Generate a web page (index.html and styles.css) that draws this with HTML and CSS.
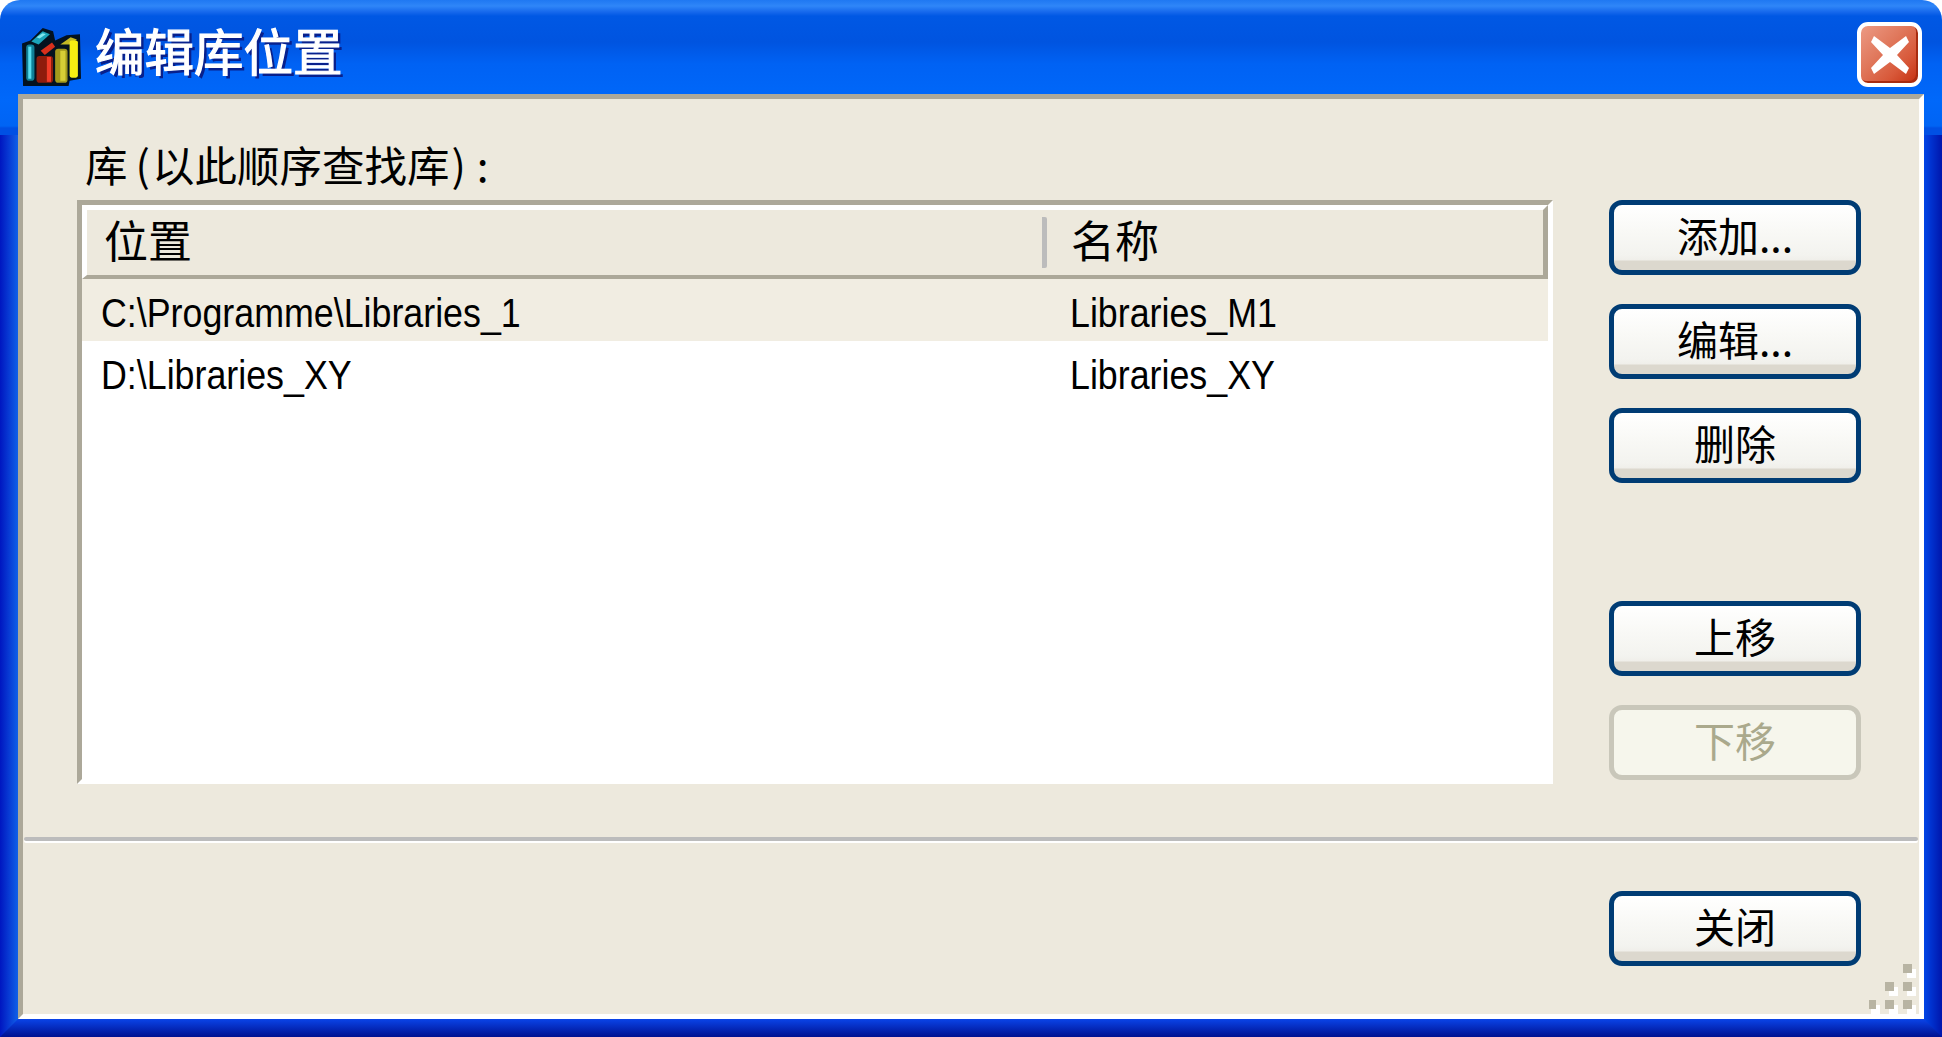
FILE: index.html
```html
<!DOCTYPE html>
<html lang="zh-CN">
<head>
  <meta charset="UTF-8" />
  <title>编辑库位置</title>
  <link rel="stylesheet" href="styles.css">
</head>
<body>

  <div class="window">

    <header class="titlebar">
      <svg class="title-icon" viewBox="0 0 58 58" width="60" height="60">
        <path d="M1 16 L9 13 L21 1 L31 4 L33 13 L44 8 L57 7 L58 50 L47 52 L46 57 L2 57 Z" fill="#03121f"/>
        <path d="M10 14 L21 4 L28 7 L17 17 Z" fill="#1aa3b8"/>
        <path d="M15 10 L21 6 L24 7 L18 11 Z" fill="#7fe6ee"/>
        <rect x="5" y="17" width="8" height="35" rx="3" fill="#0f7f96"/>
        <rect x="7" y="19" width="3" height="31" fill="#58dff0"/>
        <path d="M19 23 L30 15 L33 19 L23 27 Z" fill="#d8301c"/>
        <rect x="15" y="28" width="16" height="26" rx="3" fill="#8e1c0c"/>
        <rect x="25" y="29" width="4" height="24" fill="#f03c28"/>
        <rect x="33" y="21" width="12" height="33" rx="3" fill="#a39a1c"/>
        <rect x="38" y="23" width="5" height="29" fill="#d6ce36"/>
        <path d="M38 17 L48 10 L54 12 L48 17 Z" fill="#c4ba24"/>
        <rect x="47" y="13" width="8" height="36" rx="2" fill="#f6ee12"/>
      </svg>
      <h1 class="title-text">编辑库位置</h1>
      <button class="close-btn" type="button" aria-label="关闭">
        <svg viewBox="0 0 38 38" width="38" height="38">
          <path d="M3 0 L19 12 L35 0 L38 6 L26 19 L38 32 L35 38 L19 26 L3 38 L0 32 L12 19 L0 6 Z" fill="#fff"/>
        </svg>
      </button>
    </header>

    <main class="client">
      <div class="top-area">
        <label class="list-label">库<span class="paren-open">(</span>以此顺序查找库<span class="paren-close">)</span><span class="colon">:</span></label>
        <span></span>

        <div class="list-box">
          <div class="list-head">
            <div class="head-cell head-first">位置</div>
            <div class="head-cell head-second">名称</div>
          </div>
          <div class="list-row row-selected">
            <div><span class="cell-text">C:\Programme\Libraries_1</span></div>
            <div><span class="cell-text">Libraries_M1</span></div>
          </div>
          <div class="list-row">
            <div><span class="cell-text">D:\Libraries_XY</span></div>
            <div><span class="cell-text">Libraries_XY</span></div>
          </div>
        </div>

        <div class="btn-column">
          <button class="btn" type="button">添加...</button>
          <button class="btn" type="button">编辑...</button>
          <button class="btn" type="button">删除</button>
          <button class="btn btn-gap" type="button">上移</button>
          <button class="btn" type="button" disabled>下移</button>
        </div>
      </div>

      <div class="divider"></div>

      <div class="bottom-area">
        <button class="btn" type="button">关闭</button>
      </div>

      <svg class="grip" viewBox="0 0 50 50" width="50" height="50">
        <g fill="#fff">
          <rect x="38" y="5" width="9" height="9"/>
          <rect x="20" y="23" width="9" height="9"/>
          <rect x="38" y="23" width="9" height="9"/>
          <rect x="2" y="41" width="9" height="9"/>
          <rect x="20" y="41" width="9" height="9"/>
          <rect x="38" y="41" width="9" height="9"/>
        </g>
        <g fill="#b8b4a3">
          <rect x="34" y="0" width="9" height="9"/>
          <rect x="16" y="18" width="9" height="9"/>
          <rect x="34" y="18" width="9" height="9"/>
          <rect x="-2" y="36" width="9" height="9"/>
          <rect x="16" y="36" width="9" height="9"/>
          <rect x="34" y="36" width="9" height="9"/>
        </g>
      </svg>
    </main>

    <div class="frame-bottom"></div>

  </div>

</body>
</html>
```

FILE: styles.css
```css
html, body {
  margin: 0;
  padding: 0;
  background: #fff;
}

body {
  font-family: "Liberation Sans", "Noto Sans CJK SC", sans-serif;
  color: #000;
}

.window {
  width: 1942px;
  height: 1037px;
  overflow: hidden;
  border-radius: 20px 20px 0 0;
  display: flex;
  flex-direction: column;
  background:
    linear-gradient(to bottom,
      #1f78f2 0, #2f86f8 6px, #1668ec 12px, #0058e4 16px, #0054e0 42px,
      #0062f4 64px, #0068fa 100px, #0064f4 126px, #0050e4 128px, #0050e4 135px)
      top left / 100% 135px no-repeat,
    linear-gradient(to right, #0016c0, #1060e8) left top / 18px 100% no-repeat,
    linear-gradient(to right, #0044e6, #0016ac) right top / 18px 100% no-repeat;
}

/* title bar */
.titlebar {
  height: 94px;
  flex: none;
  display: flex;
  align-items: center;
  padding: 0 20px 0 21px;
  box-sizing: border-box;
}

.title-icon {
  flex: none;
  margin-top: 20px;
}

.title-text {
  margin: 6px 0 0 14px;
  font-family: "Noto Sans CJK SC", sans-serif;
  font-size: 49.5px;
  font-weight: 400;
  line-height: 60px;
  color: #fff;
  -webkit-text-stroke: 1.2px #fff;
  text-shadow: 3px 3px 0 #08208c;
}

.close-btn {
  margin-left: auto;
  margin-top: 15px;
  width: 65px;
  height: 65px;
  padding: 0;
  flex: none;
  display: flex;
  align-items: center;
  justify-content: center;
  border: 4px solid #fff;
  border-radius: 11px;
  box-shadow: inset -2px -2px 0 #a82c10;
  background: linear-gradient(135deg, #ec9a84 0%, #e0785c 40%, #d8593a 70%, #c42e0e 100%);
}

/* dialog client area */
.client {
  position: relative;
  flex: 1;
  margin: 0 18px;
  border: 5px solid;
  border-color: #aca899 #fff #fff #aca899;
  background: #ede9dd;
}

.top-area {
  display: grid;
  grid-template-columns: 1476px 252px;
  grid-template-rows: 101px 584px;
  column-gap: 56px;
  margin-left: 54px;
}

.list-label {
  align-self: end;
  margin: 0 0 13px 8px;
  font-family: "Noto Sans CJK SC", sans-serif;
  font-size: 42.5px;
  line-height: 46px;
  white-space: nowrap;
}

.paren-open {
  margin-left: 8px;
  margin-right: 2px;
}

.paren-close {
  margin-left: 2px;
}

.colon {
  margin-left: 11px;
}

/* list */
.list-box {
  box-sizing: border-box;
  border: 5px solid;
  border-color: #aca899 #fff #fff #aca899;
  background: #fff;
}

.list-head {
  height: 74px;
  box-sizing: border-box;
  display: grid;
  grid-template-columns: 960px 1fr;
  align-items: center;
  border: 5px solid;
  border-width: 5px 5px 4px 5px;
  border-color: #fff #aca899 #aca899 #fff;
  background: #ede9dd;
}

.head-cell {
  font-family: "Noto Sans CJK SC", sans-serif;
  font-size: 44px;
  line-height: 44px;
}

.head-first {
  height: 51px;
  box-sizing: border-box;
  padding-left: 17px;
  border-right: 5px solid #bcbcbc;
  border-radius: 2px;
}

.head-second {
  padding-left: 24px;
  margin-bottom: 7px;
}

.list-row {
  height: 61.5px;
  box-sizing: border-box;
  padding-top: 7px;
  display: grid;
  grid-template-columns: 969px 1fr;
  padding-left: 19px;
  align-items: center;
  font-size: 41px;
  line-height: 46px;
}

.row-selected {
  background: #f1ede2;
}

.cell-text {
  display: inline-block;
  transform: scaleX(0.873);
  transform-origin: left center;
  white-space: nowrap;
}

/* buttons */
.btn-column {
  display: flex;
  flex-direction: column;
  gap: 29px;
}

.btn-gap {
  margin-top: 89px;
}

.btn {
  display: block;
  width: 252px;
  height: 75px;
  padding: 0 0 8px;
  box-sizing: border-box;
  border: 5px solid #003c74;
  border-radius: 13px;
  font-family: "Noto Sans CJK SC", sans-serif;
  font-size: 41px;
  line-height: 56px;
  color: #000;
  background: linear-gradient(to bottom, #fff 0, #f9f9f6 25px, #f3f3ef 50px, #f0efea 55px, #dcd8ce 56px, #dcd8ce 65px);
}

.btn:disabled {
  color: #aaa98c;
  border-color: #c9c7ba;
  background: #f6f6ec;
}

.divider {
  height: 4px;
  margin: 53px 1px 0;
  background: #bcbcbc;
  border-radius: 2px;
  box-shadow: 0 2px 0 #fff;
}

.bottom-area {
  display: flex;
  justify-content: flex-end;
  margin: 50px 58px 0 0;
}

.grip {
  position: absolute;
  right: 0;
  bottom: 0;
  overflow: hidden;
}

.frame-bottom {
  height: 18px;
  flex: none;
  background: linear-gradient(to bottom, #0a44e8, #001090);
  clip-path: polygon(0 100%, 18px 0, calc(100% - 18px) 0, 100% 100%);
}
```
